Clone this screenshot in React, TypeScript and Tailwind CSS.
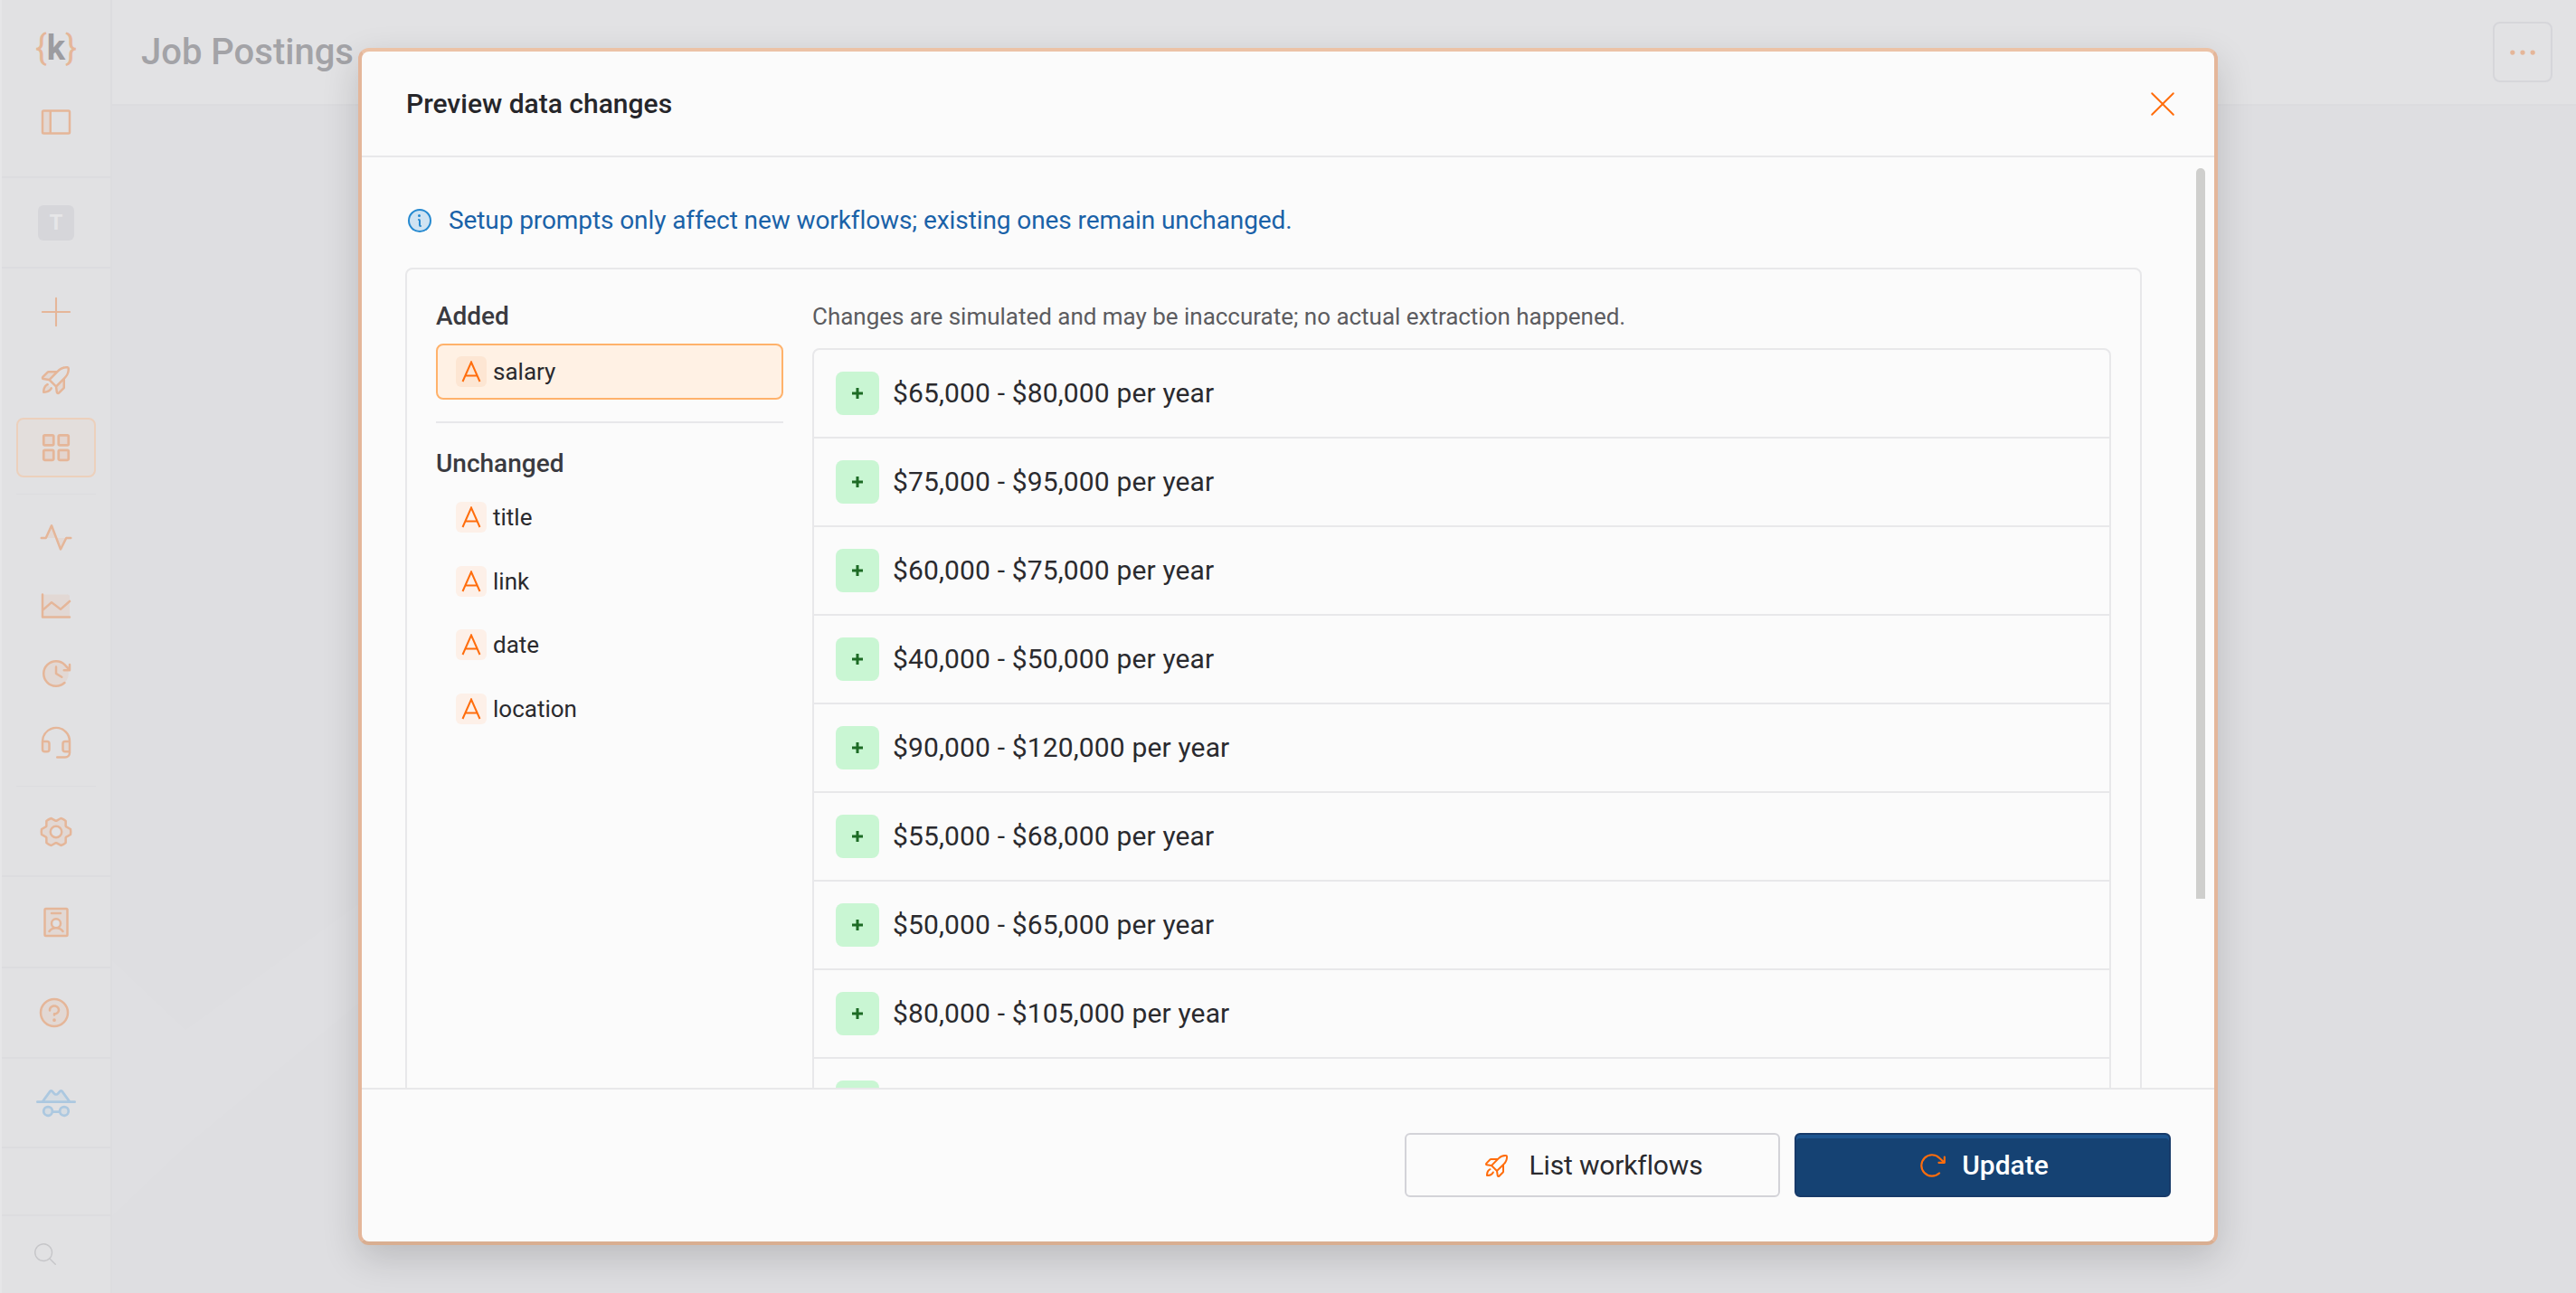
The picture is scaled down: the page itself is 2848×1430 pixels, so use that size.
import type { ReactNode } from "react";
import {
  PiArrowClockwise,
  PiChartLineDuotone,
  PiClockClockwiseDuotone,
  PiDetectiveDuotone,
  PiDotsThreeBold,
  PiGearSixDuotone,
  PiHeadsetDuotone,
  PiIdentificationBadgeDuotone,
  PiInfoDuotone,
  PiMagnifyingGlassLight,
  PiPlusLight,
  PiPulseDuotone,
  PiQuestionDuotone,
  PiRocketLaunch,
  PiRocketLaunchDuotone,
  PiSidebarSimpleDuotone,
  PiSquaresFourDuotone,
  PiXLight,
} from "react-icons/pi";

const salaries = [
  "$65,000 - $80,000 per year",
  "$75,000 - $95,000 per year",
  "$60,000 - $75,000 per year",
  "$40,000 - $50,000 per year",
  "$90,000 - $120,000 per year",
  "$55,000 - $68,000 per year",
  "$50,000 - $65,000 per year",
  "$80,000 - $105,000 per year",
];

const unchangedFields = ["title", "link", "date", "location"];

function NavItem({ children, active = false }: { children: ReactNode; active?: boolean }) {
  return (
    <div
      className={`flex h-[66px] w-[88px] items-center justify-center rounded-[8px] border-2 text-[#e5b699] ${
        active ? "border-[#ecd0bc] bg-[#e3dedc]" : "border-transparent"
      }`}
    >
      {children}
    </div>
  );
}

function Sidebar() {
  return (
    <aside className="flex h-full w-[124px] shrink-0 flex-col border-x-2 border-l-[#e6e6e8] border-r-[#dcdcdf] bg-[#e1e1e3]">
      <div className="flex h-[197px] shrink-0 flex-col items-center border-b-2 border-[#dcdcdf] pt-[29px]">
        <div className="flex h-[48px] items-center text-[38px] leading-none">
          <span className="text-[#e5b699]">{"{"}</span>
          <span className="font-bold text-[#9c9ca0]">k</span>
          <span className="text-[#e5b699]">{"}"}</span>
        </div>
        <PiSidebarSimpleDuotone className="mt-[38px] text-[#e5b699]" size={40} />
      </div>
      <div className="flex h-[100px] shrink-0 items-center justify-center border-b-2 border-[#dcdcdf]">
        <div className="flex h-[39px] w-[40px] items-center justify-center rounded-[6px] bg-[#d6d6da] text-[24px] font-bold text-[#e6e6e8]">
          T
        </div>
      </div>
      <div className="flex h-[673px] shrink-0 flex-col items-center border-b-2 border-[#dcdcdf] pt-[15px]">
        <div className="flex flex-col gap-[9px]">
          <NavItem>
            <PiPlusLight size={44} />
          </NavItem>
          <NavItem>
            <PiRocketLaunchDuotone size={40} />
          </NavItem>
          <NavItem active>
            <PiSquaresFourDuotone size={44} />
          </NavItem>
        </div>
        <div className="mb-[15px] mt-[18px] h-px w-[88px] bg-[#dcdcdf]" />
        <div className="flex flex-col gap-[9px]">
          <NavItem>
            <PiPulseDuotone size={40} />
          </NavItem>
          <NavItem>
            <PiChartLineDuotone size={40} />
          </NavItem>
          <NavItem>
            <PiClockClockwiseDuotone size={40} />
          </NavItem>
          <NavItem>
            <PiHeadsetDuotone size={40} />
          </NavItem>
        </div>
        <div className="mb-[17px] mt-[16px] h-px w-[88px] bg-[#dcdcdf]" />
        <NavItem>
          <PiGearSixDuotone size={40} />
        </NavItem>
      </div>
      <div className="flex h-[101px] shrink-0 items-center justify-center border-b-2 border-[#dcdcdf] text-[#e5b699]">
        <PiIdentificationBadgeDuotone size={40} />
      </div>
      <div className="flex h-[100px] shrink-0 items-center justify-center border-b-2 border-[#dcdcdf] text-[#e5b699]">
        <PiQuestionDuotone className="mr-[4px]" size={40} />
      </div>
      <div className="flex h-[99px] shrink-0 items-center justify-center border-b-2 border-[#dcdcdf] text-[#acc8e0]">
        <PiDetectiveDuotone size={44} />
      </div>
      <div className="h-[75px] shrink-0 border-b-2 border-[#dcdcdf]" />
      <div className="flex flex-1 items-center pb-[1px] pl-[33px] text-[#c6c6c9]">
        <PiMagnifyingGlassLight size={30} />
      </div>
    </aside>
  );
}

function FieldIcon({ tint }: { tint: string }) {
  return (
    <span className={`flex h-[34px] w-[34px] shrink-0 items-center justify-center rounded-[6px] ${tint}`}>
      <svg width="22" height="24" viewBox="0 0 22 24" fill="none" stroke="#ff6d0c" strokeWidth="2">
        <path d="M1.5 23 11 1.5 20.5 23M4.5 16.5h13" />
      </svg>
    </span>
  );
}

function FieldList() {
  return (
    <div className="w-[384px] shrink-0">
      <p className="text-[28px] font-[480] leading-[36px] text-[#3a3a40]">Added</p>
      <div className="mt-[12px] flex h-[62px] items-center gap-[7px] rounded-[8px] border-2 border-[#ffb26b] bg-[#fff1e4] pl-[20px]">
        <FieldIcon tint="bg-[#fde6d3]" />
        <span className="text-[26px] leading-none text-[#2a2a2e]">salary</span>
      </div>
      <div className="mt-[24px] h-[2px] bg-[#e8e8ea]" />
      <p className="mt-[27px] text-[28px] font-[480] leading-[36px] text-[#3a3a40]">Unchanged</p>
      <div className="mt-[24px] flex flex-col gap-[36.7px] pl-[22px]">
        {unchangedFields.map((field) => (
          <div key={field} className="flex items-center gap-[7px]">
            <FieldIcon tint="bg-[#fdf0e8]" />
            <span className="text-[26px] leading-none text-[#2a2a2e]">{field}</span>
          </div>
        ))}
      </div>
    </div>
  );
}

function SalaryRow({ value }: { value?: string }) {
  return (
    <div className="flex h-[98px] items-center gap-[15px] border-b-2 border-[#e8e8ea] px-[24px]">
      <span className="flex h-[48px] w-[48px] shrink-0 items-center justify-center rounded-[8px] bg-[#c9f6d3]">
        <svg width="14" height="14" viewBox="0 0 14 14" stroke="#1d6b25" strokeWidth="3">
          <path d="M7 1v12M1 7h12" />
        </svg>
      </span>
      {value && <span className="pb-[2px] text-[30px] tracking-[0.15px] text-[#2a2a2e]">{value}</span>}
    </div>
  );
}

function PreviewDialog() {
  return (
    <div className="absolute left-[396px] top-[53px] flex h-[1324px] w-[2056px] flex-col rounded-[12px] border-4 border-[#e4b69a] border-t-[#ecc2a6] border-b-[#d9ae91] bg-[#fbfbfb] shadow-[0_14px_40px_rgba(0,0,0,0.16)]">
      <header className="flex h-[117px] shrink-0 items-center justify-between border-b-2 border-[#e8e8ea] pl-[49px] pr-[36px]">
        <h2 className="text-[30px] font-[480] text-[#26262a]">Preview data changes</h2>
        <PiXLight className="text-[#ff6d0c]" size={42} />
      </header>

      <div className="relative min-h-0 flex-1 overflow-hidden">
        <div className="absolute left-[2028px] top-[12px] h-[808px] w-[10px] rounded-t-[5px] bg-[#cfcfcd]" />
        <div className="px-[48px] pt-[52px]">
          <div className="flex h-[36px] items-center gap-[16px] text-[#1a62a8]">
            <PiInfoDuotone className="text-[#2589d0]" size={32} />
            <span className="text-[28px] tracking-[-0.09px]">
              Setup prompts only affect new workflows; existing ones remain unchanged.
            </span>
          </div>
          <div className="mt-[34px] flex w-[1920px] gap-[32px] rounded-[8px] border-2 border-[#e8e8ea] p-[32px] pt-[34px]">
            <FieldList />
            <div className="min-w-0 flex-1">
              <p className="text-[26px] leading-[36px] tracking-[-0.02px] text-[#5c5c60]">
                Changes are simulated and may be inaccurate; no actual extraction happened.
              </p>
              <div className="mt-[17px] rounded-[8px] border-2 border-[#e8e8ea]">
                {salaries.map((value) => (
                  <SalaryRow key={value} value={value} />
                ))}
                <SalaryRow />
              </div>
            </div>
          </div>
        </div>
      </div>

      <footer className="flex h-[170px] shrink-0 justify-end gap-[16px] border-t-2 border-[#e8e8ea] pr-[48px] pt-[48px]">
        <button className="flex h-[71px] w-[415px] items-center justify-center gap-[20px] rounded-[6px] border-2 border-[#d3d3d8] text-[30px] tracking-[-0.15px] text-[#2a2a2e]">
          <PiRocketLaunch className="text-[#ff6d0c]" size={32} />
          List workflows
        </button>
        <button className="flex h-[71px] w-[416px] items-center justify-center gap-[16px] rounded-[6px] border-2 border-[#173a69] bg-[#154273] text-[30px] font-[480] text-white shadow-[inset_0_4px_0_#1d5590]">
          <PiArrowClockwise className="text-[#ff6d0c]" size={34} />
          Update
        </button>
      </footer>
    </div>
  );
}

export default function App() {
  return (
    <div className="relative flex h-[1430px] w-[2848px] overflow-hidden bg-[#dedee1] font-['Roboto',sans-serif]">
      <Sidebar />
      <main className="relative flex min-w-0 flex-1 flex-col">
        {/* faint low-poly backdrop, offset by the sidebar width */}
        <svg className="absolute inset-0 h-full w-full" viewBox="124 0 2724 1430" fill="#ffffff" aria-hidden="true">
          <polygon points="124,1062 205,1139 396,1000 396,1110 205,1268 124,1345" opacity="0.04" />
          <polygon points="2452,390 2760,117 2848,117 2848,300 2510,1000 2452,1050" opacity="0.02" />
          <polygon points="2452,1000 2848,1160 2848,1340 2452,1180" opacity="0.025" />
        </svg>
        <div className="relative flex h-[117px] shrink-0 items-center justify-between border-b-2 border-[#dcdcdf] bg-[#e2e2e4] pl-[32px] pr-[26px]">
          <h1 className="text-[40px] font-medium text-[#a3a3a7]">Job Postings</h1>
          <div className="flex h-[67px] w-[66px] items-center justify-center rounded-[8px] border-2 border-[#d6d6da] text-[#e5b699]">
            <PiDotsThreeBold size={42} />
          </div>
        </div>
      </main>
      <PreviewDialog />
    </div>
  );
}
